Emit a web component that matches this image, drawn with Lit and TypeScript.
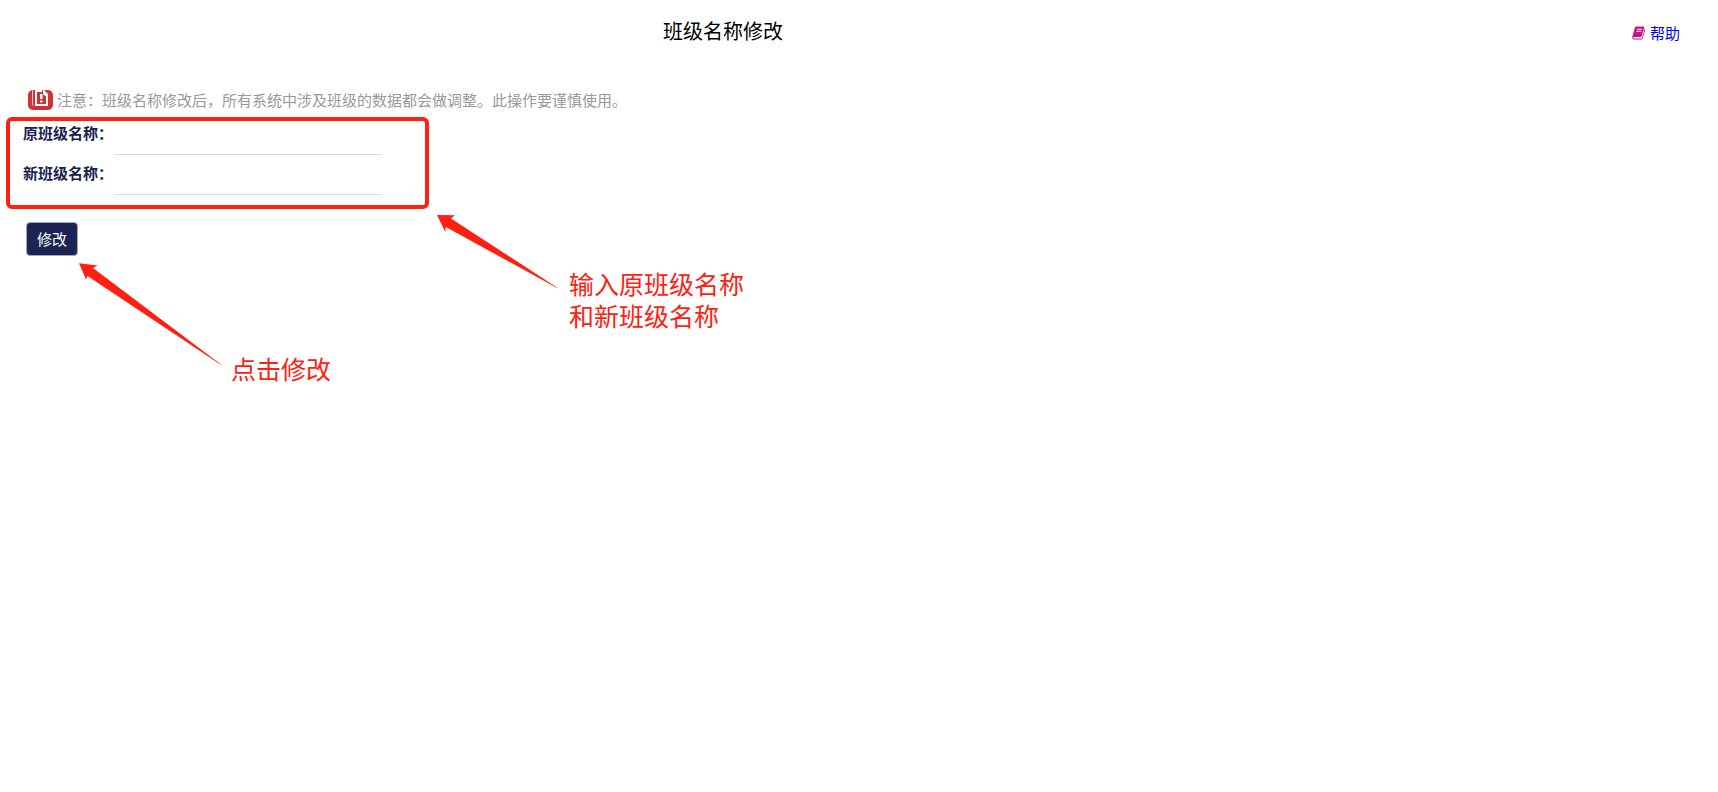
import { LitElement, html, css } from "lit";
import { customElement } from "lit/decorators.js";

@customElement("rename-form")
class RenameForm extends LitElement {
  static styles = css`
    :host { display: block; }
    .form { margin: 0; }
    .fields { position: relative; padding: 0 23px; }
    .row { display: flex; align-items: flex-start; height: 40px; }
    .label {
      width: 91px; line-height: 28px; font-size: 15px;
      font-weight: 700; color: #18224f;
    }
    .input {
      box-sizing: border-box; width: 268px; height: 36px; padding: 0 4px;
      border: 0; border-bottom: 1px solid #dcdcdc; background: transparent;
      font: inherit; font-size: 15px; outline: none;
    }
    .frame {
      position: absolute; left: 6px; top: -2px; box-sizing: border-box;
      width: 423px; height: 92px; border: 4px solid #ff2012;
      border-radius: 6px; pointer-events: none;
    }
    .actions { padding: 23px 26px; }
    .button {
      box-sizing: border-box; width: 52px; height: 34px; padding: 0;
      border: 1px solid #a4a7b9; border-radius: 4px; background: #1b2452;
      color: #fff; font: inherit; font-size: 15px; line-height: 30px;
    }
  `;
  render() {
    return html`
      <form class="form" @submit=${(e: Event) => e.preventDefault()}>
        <div class="fields">
          <div class="row">
            <label class="label" for="old">原班级名称&#xFF1A;</label>
            <input class="input" id="old" type="text" />
          </div>
          <div class="row">
            <label class="label" for="new">新班级名称&#xFF1A;</label>
            <input class="input" id="new" type="text" />
          </div>
          <div class="frame"></div>
        </div>
        <div class="actions"><button class="button" type="submit">修改</button></div>
      </form>
    `;
  }
}

@customElement("app-root")
class AppRoot extends LitElement {
  static styles = css`
    :host {
      display: block; position: relative; min-height: 100vh; background: #fff;
      font-family: "Noto Sans CJK SC", "Liberation Sans", sans-serif;
    }
    .header {
      display: grid; grid-template-columns: 1fr 234px; align-items: end;
      padding: 15px 38px 17px 0;
    }
    .title {
      margin: 0; font-size: 20px; font-weight: 400; line-height: 32px;
      color: #000; text-align: center;
    }
    .help {
      display: flex; align-items: center; gap: 4px; justify-self: end;
      font-size: 15px; line-height: 28px; color: #0000ee; text-decoration: none;
    }
    .note {
      display: flex; align-items: center; gap: 4px; margin: 0;
      padding: 21px 28px 4px; font-size: 15px; line-height: 30px; color: #999;
    }
    .icon { display: block; flex: none; }
    .arrows {
      position: absolute; left: 0; top: 0; pointer-events: none; fill: #ff2012;
    }
    .callout {
      position: absolute; margin: 0; font-size: 25px; line-height: 32px;
      color: #ff2012; white-space: nowrap;
    }
    .callout-fields { left: 569px; top: 267px; }
    .callout-button { left: 231px; top: 352px; }
  `;
  render() {
    return html`
      <header class="header">
        <h1 class="title">班级名称修改</h1>
        <a class="help" href="#help">
          <svg class="icon" width="14" height="14" viewBox="0 0 14 14">
            <path fill="#c71585" d="M4 .5h7.600q1 0 .7 1L9.800 10q-.3 1-1.300 1H2q-1 .2-.8.9.1.5.8.5h7.200q.7 0 .9-.7L12.600 3q.9.300.6 1.200L10.700 12.300q-.3 1.200-1.600 1.200H2Q0 13.500.2 11.300L2.700 2Q3.100.5 4 .5Z"/>
            <path stroke="#fff" stroke-width=".9" d="M5 3.300h5M4.400 5.400h5"/>
          </svg>
          <span>帮助</span>
        </a>
      </header>
      <p class="note">
        <svg class="icon" width="25" height="20" viewBox="0 0 25 20">
          <rect width="25" height="20" rx="5" fill="#cf3235"/>
          <path fill="#fff" fill-opacity=".75" d="M4 0h1v14l1 2q-2-.5-2-2.500Z"/>
          <path fill="#fff" d="M7 0h7v2H9V14H18V6h2v10H7Z"/>
          <path fill="#fff" d="M15 0h1l4 4v2h-3l-2-2Z"/>
          <path fill="#fff" d="M12 4h2.500v5h-2.500ZM12 10.500h2.500v2h-2.500Z"/>
        </svg>
        <span>注意&#xFF1A;班级名称修改后&#xFF0C;所有系统中涉及班级的数据都会做调整。此操作要谨慎使用。</span>
      </p>
      <rename-form></rename-form>
      <svg class="arrows" width="600" height="400" viewBox="0 0 600 400" aria-hidden="true">
        <path d="M437 215 455 215.300 451 218.500 557 287.500V288L445.800 227 445.300 232Z"/>
        <path d="M79 263.300 97.500 265.500 93 268 221 364.500V365L87.500 276 86 279.500Z"/>
      </svg>
      <p class="callout callout-fields">输入原班级名称<br />和新班级名称</p>
      <p class="callout callout-button">点击修改</p>
    `;
  }
}
